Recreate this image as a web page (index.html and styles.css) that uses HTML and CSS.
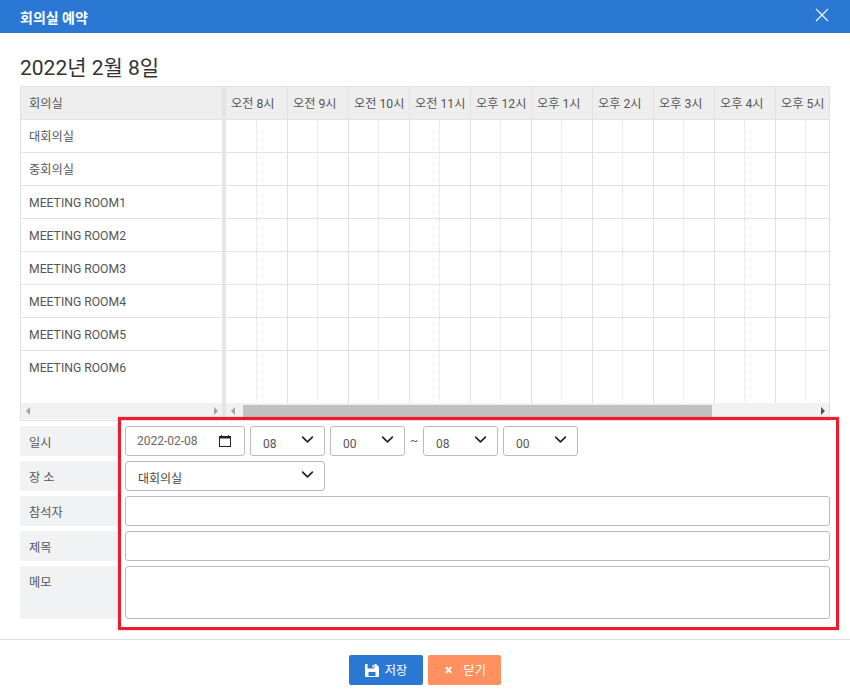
FILE: index.html
```html
<!DOCTYPE html>
<html lang="ko">
<head>
    <meta charset="UTF-8">
    <title>회의실 예약</title>
    <link rel="stylesheet" href="styles.css">
</head>
<body>

    <div class="modal">
        <div class="modal-head">
            <span class="modal-title">회의실 예약</span>
            <svg class="modal-close" width="14" height="14" viewBox="0 0 14 14"><path d="M1 1l12 12M13 1L1 13" /></svg>
        </div>

        <div class="modal-body">
            <h2 class="day-title">2022년 2월 8일</h2>

            <div class="scheduler">
                <div class="pane-rooms">
                    <div class="rooms-head">회의실</div>
                    <div class="room">대회의실</div>
                    <div class="room">중회의실</div>
                    <div class="room">MEETING ROOM1</div>
                    <div class="room">MEETING ROOM2</div>
                    <div class="room">MEETING ROOM3</div>
                    <div class="room">MEETING ROOM4</div>
                    <div class="room">MEETING ROOM5</div>
                    <div class="room room-last">MEETING ROOM6</div>
                    <div class="scrollbar">
                        <i class="arrow arrow-left arrow-dim"></i>
                        <i class="arrow arrow-right arrow-dim"></i>
                    </div>
                </div>
                <div class="pane-times">
                    <div class="times-head">
                        <div class="hour">오전 8시</div>
                        <div class="hour">오전 9시</div>
                        <div class="hour">오전 10시</div>
                        <div class="hour">오전 11시</div>
                        <div class="hour">오후 12시</div>
                        <div class="hour">오후 1시</div>
                        <div class="hour">오후 2시</div>
                        <div class="hour">오후 3시</div>
                        <div class="hour">오후 4시</div>
                        <div class="hour">오후 5시</div>
                    </div>
                    <div class="slots"><i></i><i></i><i></i><i></i><i></i><i></i><i></i><i></i><i></i><i></i></div>
                    <div class="slots"><i></i><i></i><i></i><i></i><i></i><i></i><i></i><i></i><i></i><i></i></div>
                    <div class="slots"><i></i><i></i><i></i><i></i><i></i><i></i><i></i><i></i><i></i><i></i></div>
                    <div class="slots"><i></i><i></i><i></i><i></i><i></i><i></i><i></i><i></i><i></i><i></i></div>
                    <div class="slots"><i></i><i></i><i></i><i></i><i></i><i></i><i></i><i></i><i></i><i></i></div>
                    <div class="slots"><i></i><i></i><i></i><i></i><i></i><i></i><i></i><i></i><i></i><i></i></div>
                    <div class="slots"><i></i><i></i><i></i><i></i><i></i><i></i><i></i><i></i><i></i><i></i></div>
                    <div class="slots slots-last"><i></i><i></i><i></i><i></i><i></i><i></i><i></i><i></i><i></i><i></i></div>
                    <div class="scrollbar">
                        <i class="arrow arrow-left arrow-dim"></i>
                        <b class="thumb"></b>
                        <i class="arrow arrow-right"></i>
                    </div>
                </div>
            </div>

            <div class="form-area">
                <div class="form-row">
                    <label class="form-label">일시</label>
                    <div class="form-field">
                        <div class="date-box">
                            <input class="date-text" type="text" value="2022-02-08">
                            <svg width="12" height="12" viewBox="0 0 12 12"><path class="cal-fill" d="M0 1h2V0h1v1h6V0h1v1h2v11H0z" /><path class="cal-hole" d="M1 3.500h10V11H1z" /></svg>
                        </div>
                        <select class="select select-time"><option>08</option></select>
                        <select class="select select-time"><option>00</option></select>
                        <span class="tilde">~</span>
                        <select class="select select-time"><option>08</option></select>
                        <select class="select select-time"><option>00</option></select>
                    </div>
                </div>
                <div class="form-row">
                    <label class="form-label">장 소</label>
                    <div class="form-field">
                        <select class="select select-room"><option>대회의실</option></select>
                    </div>
                </div>
                <div class="form-row">
                    <label class="form-label">참석자</label>
                    <div class="form-field"><input class="text-input" type="text"></div>
                </div>
                <div class="form-row">
                    <label class="form-label">제목</label>
                    <div class="form-field"><input class="text-input" type="text"></div>
                </div>
                <div class="form-row">
                    <label class="form-label">메모</label>
                    <div class="form-field"><textarea class="memo"></textarea></div>
                </div>
                <div class="highlight"></div>
            </div>
        </div>

        <div class="modal-foot">
            <button class="btn btn-save">
                <svg width="14" height="13" viewBox="0 0 14 13"><path d="M0 1a1 1 0 0 1 1-1h1.500v4.500h7V0H11l3 3v9a1 1 0 0 1-1 1H1a1 1 0 0 1-1-1zM3.500 8v4h7V8zM7.500 1h1.500v2.500H7.500z" fill-rule="evenodd" /></svg>
                저장
            </button>
            <button class="btn btn-close">
                <span class="btn-x">×</span>
                닫기
            </button>
        </div>
    </div>

</body>
</html>
```

FILE: styles.css
```css
* { box-sizing: border-box; }
body { margin: 0; background: #fff; font-family: Roboto, "Noto Sans CJK KR", sans-serif; font-size: 12px; color: #555; }

.modal { width: 850px; height: 700px; }
.modal-head { height: 33px; background-color: #2b78d4; display: flex; align-items: center; justify-content: space-between; padding: 0 21px 0 20px; }
.modal-title { color: #fff; font-size: 14px; font-weight: 700; }
.modal-close { fill: none; stroke: #fff; stroke-width: 1.1; margin-top: -3px; }

.modal-body { padding: 20px 20px 0; }
.day-title { margin: 0 0 5px; height: 28px; line-height: 30px; font-size: 21px; font-weight: 400; color: #333; }

.scheduler { display: flex; height: 335px; border: 1px solid #e0e2e6; font-size: 12.2px; }
.pane-rooms { width: 205px; flex: none; border-right: 4px solid #e4e5e9; display: flex; flex-direction: column; }
.pane-times { flex: 1; min-width: 0; overflow: hidden; display: flex; flex-direction: column; }

.rooms-head { height: 33px; line-height: 34px; padding-left: 8px; background-color: #eee; border-bottom: 1px solid #e0e2e6; }
.room { height: 33px; line-height: 34px; padding-left: 8px; border-bottom: 1px solid #e0e2e6; }
.room-last { height: 53px; border-bottom: none; }

.times-head, .slots { display: flex; width: 611px; height: 33px; border-bottom: 1px solid #e0e2e6; }
.times-head { background-color: #eee; }
.slots-last { height: 53px; border-bottom: none; }
.hour { width: 61px; flex: none; border-right: 1px solid #e0e2e6; line-height: 34px; white-space: nowrap; padding-left: 5px; }
.hour:first-child { width: 62px; }
.slots i { width: 61px; flex: none; border-right: 1px solid #e0e2e6; padding-left: 29px; }
.slots i:first-child { width: 62px; padding-left: 30px; }
.slots i::before { content: ""; display: block; height: 100%; border-left: 1px dotted #dfe0e4; }

.scrollbar { height: 16px; margin-top: -1px; background-color: #f1f1f1; display: flex; align-items: center; justify-content: space-between; padding: 0 4px 0 5px; position: relative; }
.thumb { position: absolute; left: 17px; width: 469px; top: 2px; bottom: 0; background-color: #c1c1c1; }
.arrow { width: 0; height: 0; border-top: 4px solid transparent; border-bottom: 4px solid transparent; }
.arrow-left { border-right: 4px solid #505050; }
.arrow-right { border-left: 4px solid #505050; }
.arrow-dim.arrow-left { border-right-color: #a3a3a3; }
.arrow-dim.arrow-right { border-left-color: #a3a3a3; }

.form-area { position: relative; margin-top: 5px; }
.form-row { display: flex; margin-bottom: 5px; }
.form-label { width: 100px; flex: none; margin-right: 5px; padding: 7px 0 0 9px; background-color: #f1f2f4; font-size: 12.2px; min-height: 30px; }
.form-field { flex: 1; min-width: 0; display: flex; align-items: center; gap: 5px; }

.date-box { width: 120px; height: 30px; display: flex; align-items: center; padding: 0 13px 0 11px; border: 1px solid #bbb; border-radius: 3px; }
.date-text { width: 82px; flex: 1; min-width: 0; border: none; outline: none; padding: 0; font: inherit; color: #666; }
.cal-fill { fill: #222; }
.cal-hole { fill: #fff; }

.select { height: 30px; padding: 6px 0 0 12px; border: 1px solid #bbb; border-radius: 3px; font: inherit; color: #555; appearance: none; background: #fff url("data:image/svg+xml,%3csvg xmlns='http://www.w3.org/2000/svg' viewBox='0 0 16 16'%3e%3cpath fill='none' stroke='%23222' stroke-linecap='round' stroke-linejoin='round' stroke-width='2' d='M2 5l6 6 6-6'/%3e%3c/svg%3e") no-repeat right 10px top 6px / 13px 13px; }
.select-time { width: 75px; }
.select-room { width: 200px; color: #444; }
.tilde { width: 8px; color: #666; }

.text-input { width: 100%; height: 30px; border: 1px solid #bbb; border-radius: 3px; outline: none; }
.memo { display: block; width: 100%; height: 53px; border: 1px solid #bbb; border-radius: 3px; outline: none; resize: none; }

.highlight { position: absolute; left: 98px; top: -9px; width: 721px; height: 213px; border: 3px solid #ee1c2e; box-shadow: 0 0 1px rgba(238, 28, 46, 0.6); pointer-events: none; }

.modal-foot { margin-top: 20px; padding-top: 15px; border-top: 1px solid #ddd; display: flex; justify-content: center; gap: 5px; }
.btn { height: 30px; border: none; border-radius: 2px; color: #fff; font: inherit; font-size: 12.2px; display: flex; align-items: center; justify-content: center; gap: 6px; cursor: pointer; }
.btn svg { fill: #fff; }
.btn-save { width: 74px; background-color: #2b78d4; }
.btn-close { width: 73px; background-color: #ff9060; gap: 11px; padding-left: 8px; }
.btn-x { font-weight: 700; font-size: 14px; }
```
